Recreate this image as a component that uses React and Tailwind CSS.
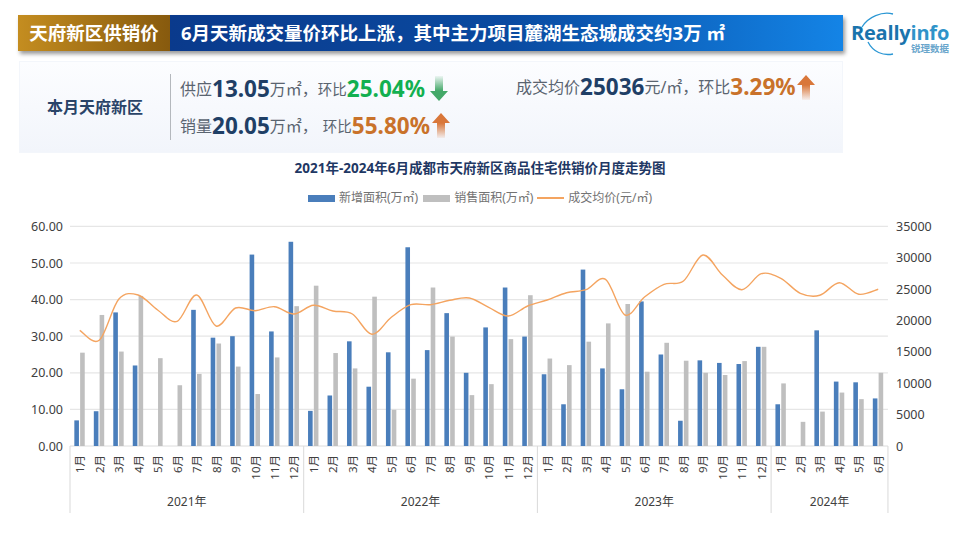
const FONT = "font-['Noto_Sans','Noto_Sans_CJK_SC',sans-serif]";

const blue = [
  7, 9.5, 36.5, 22, 0, 0, 37.2, 29.6, 30, 52.3, 31.3, 55.8,
  9.6, 13.8, 28.6, 16.2, 25.6, 54.3, 26.2, 36.3, 20, 32.4, 43.3, 29.9,
  19.6, 11.4, 48.2, 21.2, 15.5, 39.5, 25, 6.9, 23.4, 22.7, 22.4, 27.1,
  11.4, 0, 31.6, 17.6, 17.4, 13,
];
const gray = [
  25.5, 35.8, 25.8, 41, 24, 16.6, 19.7, 28, 21.7, 14.2, 24.2, 38.2,
  43.8, 25.4, 21.2, 40.8, 9.9, 18.4, 43.3, 29.9, 13.9, 16.9, 29.2, 41.2,
  23.9, 22.1, 28.5, 33.5, 38.8, 20.3, 28.2, 23.3, 20, 19.4, 23.2, 27.1,
  17.1, 6.6, 9.4, 14.6, 12.8, 20,
];
// line y positions read in page pixels
const lineY = [
  330.3, 340.3, 299.3, 295, 310, 321.3, 295, 326, 308, 310.7, 306.7, 314,
  305.3, 311, 314, 334.3, 317.3, 304.7, 304.7, 300.3, 298, 307.3, 316, 306,
  300, 292.7, 289.7, 279.3, 315, 297, 284.3, 281, 255, 275, 289.7, 273.7,
  278.3, 293.3, 295.3, 282.7, 294.3, 289.3,
];
const months = [1, 2, 3, 4, 5, 6, 7, 8, 9, 10, 11, 12];
const labels = [...months, ...months, ...months, 1, 2, 3, 4, 5, 6];
const left = 70;
const step = 19.475;
const y0 = 446;
const unit = 3.66;
const groups = [
  { name: "2021年", from: 0, to: 12 },
  { name: "2022年", from: 12, to: 24 },
  { name: "2023年", from: 24, to: 36 },
  { name: "2024年", from: 36, to: 42 },
];

function smoothLine() {
  const pts = lineY.map((y, i) => [left + step * (i + 0.5), y]);
  let d = `M${pts[0][0]} ${pts[0][1]}`;
  for (let i = 0; i < pts.length - 1; i++) {
    const p0 = pts[i - 1] || pts[i];
    const p1 = pts[i];
    const p2 = pts[i + 1];
    const p3 = pts[i + 2] || p2;
    const c1 = [p1[0] + (p2[0] - p0[0]) / 6, p1[1] + (p2[1] - p0[1]) / 6];
    const c2 = [p2[0] - (p3[0] - p1[0]) / 6, p2[1] - (p3[1] - p1[1]) / 6];
    d += ` C${c1[0]} ${c1[1]} ${c2[0]} ${c2[1]} ${p2[0]} ${p2[1]}`;
  }
  return d;
}

function Chart() {
  const right = left + step * 42;
  return (
    <svg width="960" height="332" viewBox="0 208 960 332" className="block">
      {[10, 20, 30, 40, 50, 60].map((v) => (
        <line key={v} x1={left} x2={right} y1={y0 - v * unit} y2={y0 - v * unit} stroke="#e6e6e6" strokeWidth="1.2" />
      ))}
      <line x1={left} x2={right} y1={y0} y2={y0} stroke="#dcdcdc" strokeWidth="1" />
      {[0, 10, 20, 30, 40, 50, 60].map((v) => (
        <text key={v} x="63" y={y0 - v * unit + 4.5} textAnchor="end" fontSize="12.5" fill="#404040">
          {v.toFixed(2)}
        </text>
      ))}
      {[0, 5000, 10000, 15000, 20000, 25000, 30000, 35000].map((v) => (
        <text key={v} x="896" y={y0 - (v / 35000) * 219.6 + 4.5} fontSize="12.5" fill="#404040">
          {v}
        </text>
      ))}
      {blue.map((v, i) => {
        const cx = left + step * (i + 0.5);
        return (
          <g key={i}>
            {v > 0 && <rect x={cx - 5.4} y={y0 - v * unit} width="4.6" height={v * unit} fill="#4a7ebb" />}
            <rect x={cx + 0.4} y={y0 - gray[i] * unit} width="4.6" height={gray[i] * unit} fill="#bfbfbf" />
          </g>
        );
      })}
      <path d={smoothLine()} fill="none" stroke="#f4a460" strokeWidth="1.4" />
      {labels.map((m, i) => {
        const cx = left + step * (i + 0.5);
        return (
          <text key={i} transform={`translate(${cx + 4.5} 455) rotate(-90)`} textAnchor="end" fontSize="11.5" fill="#404040">
            {m}月
          </text>
        );
      })}
      {groups.map((g) => (
        <g key={g.name}>
          <line x1={left + step * g.from} x2={left + step * g.from} y1={y0} y2="513" stroke="#d9d9d9" strokeWidth="1" />
          <text x={left + (step * (g.from + g.to)) / 2} y="506" textAnchor="middle" fontSize="12" fill="#404040">
            {g.name}
          </text>
        </g>
      ))}
      <line x1={right} x2={right} y1={y0} y2="513" stroke="#d9d9d9" strokeWidth="1" />
    </svg>
  );
}

function Arrow({ up, id }) {
  const color = up ? "#d9773a" : "#43a868";
  return (
    <svg width="18" height="25" viewBox="0 0 18 25" className="shrink-0">
      <defs>
        <linearGradient id={id} x1="0" y1={up ? "0" : "1"} x2="0" y2={up ? "1" : "0"}>
          <stop offset="0.4" stopColor={color} />
          <stop offset="1" stopColor={color} stopOpacity="0.08" />
        </linearGradient>
      </defs>
      <path
        d={up ? "M9 0 L18 10 L13 10 L13 25 L5 25 L5 10 L0 10 Z" : "M9 25 L18 15 L13 15 L13 0 L5 0 L5 15 L0 15 Z"}
        fill={`url(#${id})`}
      />
    </svg>
  );
}

function Logo() {
  return (
    <div className="relative w-[100px] h-[44px] ml-[9px] mt-[-3px]">
      <svg width="100" height="44" viewBox="0 0 100 44" className="absolute inset-0">
        <path d="M10 15 C16 5 30 -1 41 2" fill="none" stroke="#2b97d4" strokeWidth="1.3" />
        <path d="M16 30 C21 40 31 44 41 42" fill="none" stroke="#2b97d4" strokeWidth="1.3" />
      </svg>
      <div className="absolute left-[-1px] top-[12px] text-[20px] leading-[18px] font-bold tracking-[-0.2px] text-[#1a74ad] font-['Open_Sans',sans-serif]">
        Really<span className="text-[#2f93c9]">info</span>
      </div>
      <div className="absolute right-[3px] top-[32px] text-[9.5px] leading-[9px] font-bold text-[#6aa6cc]">
        锐理数据
      </div>
    </div>
  );
}

export default function App() {
  return (
    <div className={`w-[960px] h-[540px] bg-white overflow-hidden pt-[15px] ${FONT}`}>
      <div className="flex items-start h-[36px] pl-[18px]">
        <div className="flex w-[825px] h-[36px] shadow-[2px_3px_4px_rgba(0,0,0,0.4)]">
          <div className="w-[152px] flex items-center justify-center bg-gradient-to-r from-[#c48d20] to-[#875a0e] text-white font-bold text-[18.5px]">
            天府新区供销价
          </div>
          <div className="flex-1 flex items-center pl-[11px] bg-gradient-to-r from-[#0a3a8c] via-[#0a4aa0] via-50% to-[#1484e6] text-white font-bold text-[18.5px]">
            6月天新成交量价环比上涨，其中主力项目麓湖生态城成交约3万 ㎡
          </div>
        </div>
        <Logo />
      </div>

      <div className="ml-[19px] mt-[10px] w-[824px] h-[92px] flex items-center bg-gradient-to-b from-[#fcfdff] to-[#f2f5fb] border border-[#f3f6fb]">
        <div className="w-[150px] text-center font-bold text-[16px] text-[#2a4468]">本月天府新区</div>
        <div className="w-px h-[66px] bg-[#b4b8bd]" />
        <div className="w-[336px] pl-[9px] flex flex-col gap-[7px]">
          <div className="flex items-center h-[30px] text-[#5a6470] text-[16px] leading-[24px]">
            <span>供应</span>
            <span className="font-bold text-[22.5px] leading-[28px] text-[#1f3f66]">13.05</span>
            <span>万㎡，</span>
            <span className="text-[14.5px]">环比</span>
            <span className="font-bold text-[22.5px] leading-[28px] text-[#12b050]">25.04%</span>
            <span className="ml-[5px]"><Arrow id="a1" up={false} /></span>
          </div>
          <div className="flex items-center h-[30px] text-[#5a6470] text-[16px] leading-[24px]">
            <span>销量</span>
            <span className="font-bold text-[22.5px] leading-[28px] text-[#1f3f66]">20.05</span>
            <span>万㎡，</span>
            <span className="text-[14.5px] ml-[5px]">环比</span>
            <span className="font-bold text-[22.5px] leading-[28px] text-[#c9722a]">55.80%</span>
            <span className="ml-[2px]"><Arrow id="a2" up /></span>
          </div>
        </div>
        <div className="self-start mt-[10px] ml-[9px] flex items-center h-[30px] text-[#5a6470] text-[16px] leading-[24px]">
          <span>成交均价</span>
          <span className="font-bold text-[22.5px] leading-[28px] text-[#1f3f66]">25036</span>
          <span>元/㎡，环比</span>
          <span className="font-bold text-[22.5px] leading-[28px] text-[#c9722a]">3.29%</span>
          <span className="ml-[1px]"><Arrow id="a3" up /></span>
        </div>
      </div>

      <div className="mt-[5px] text-center font-bold text-[13.5px] leading-[20px] text-[#1f3864]">
        2021年-2024年6月成都市天府新区商品住宅供销价月度走势图
      </div>

      <div className="mt-[10px] h-[20px] flex items-center justify-center text-[12px] text-[#737373]">
        <span className="w-[27px] h-[7px] bg-[#4a7ebb] mr-[4px]" />
        <span>新增面积(万㎡)</span>
        <span className="w-[27px] h-[7px] bg-[#bfbfbf] ml-[5px] mr-[4px]" />
        <span>销售面积(万㎡)</span>
        <span className="w-[27px] h-[2px] bg-[#f4a460] ml-[4px] mr-[4px]" />
        <span>成交均价(元/㎡)</span>
      </div>

      <Chart />
    </div>
  );
}
